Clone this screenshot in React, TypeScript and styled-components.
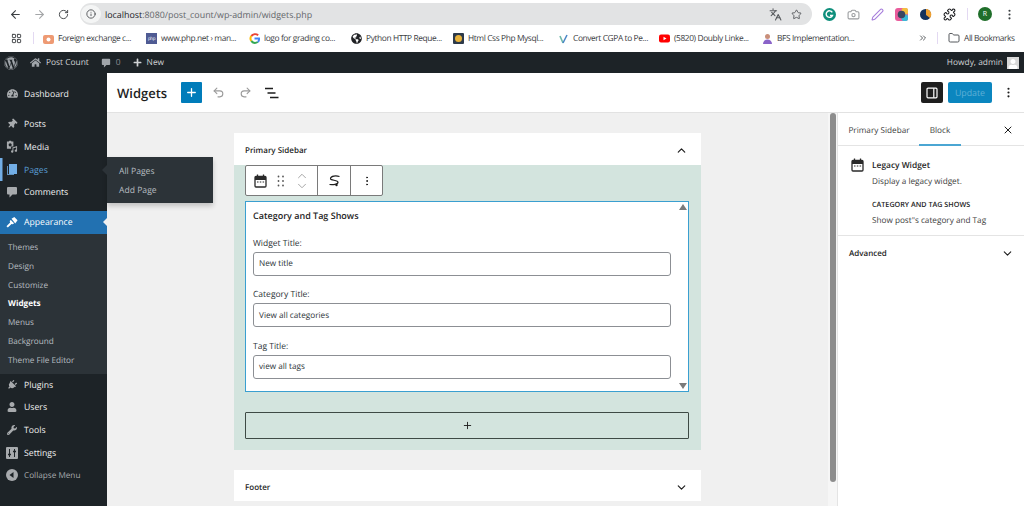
import styled, {createGlobalStyle} from 'styled-components';
import {
    ArrowLeft, ArrowRight, RotateCw, Info, Star, Languages, Camera, Puzzle, MoreVertical,
    Folder, ChevronsRight, Plus, Undo2, Redo2, X, ChevronUp, ChevronDown, Pen, LayoutGrid,
} from 'lucide-react';
import {
    FaWordpress, FaHome, FaPlus, FaThumbtack, FaUser, FaWrench, FaPlug,
    FaTachometerAlt, FaGlobeAmericas,
} from 'react-icons/fa';
import type {ReactNode} from 'react';

const GlobalStyle = createGlobalStyle`
    html, body {
        margin: 0;
        padding: 0;
        background: #fff;
        font-family: "Open Sans", "Noto Sans", sans-serif;
        text-rendering: geometricPrecision;
    }
    * {
        box-sizing: border-box;
    }
`;

const Page = styled.div`
    width: 1024px;
    height: 506px;
    overflow: hidden;
    display: flex;
    flex-direction: column;
`;

/* browser chrome */
const BrowserBar = styled.div`
    height: 26px;
    padding-top: 3px;
    display: flex;
    align-items: flex-start;
    color: #44474a;
`;

const NavButton = styled.div<{$w: number; $dim?: boolean}>`
    width: ${p => p.$w}px;
    height: 22px;
    display: flex;
    align-items: center;
    justify-content: center;
    color: ${p => (p.$dim ? '#a4a6a8' : '#3c4043')};
    flex: none;
`;

const AddressBar = styled.div`
    width: 732px;
    height: 22px;
    margin-left: 2px;
    border-radius: 11px;
    background: #e2e3e4;
    display: flex;
    align-items: center;
    flex: none;
`;

const InfoBubble = styled.div`
    width: 20px;
    height: 18px;
    margin-left: 1px;
    border-radius: 9px;
    background: #f4f5f5;
    display: flex;
    align-items: center;
    justify-content: center;
`;

const Url = styled.div`
    margin-left: 4px;
    font-size: 8.9px;
    color: #62666a;
    flex: 1;
    b {
        font-weight: 400;
        color: #202124;
    }
`;

const AddressIcons = styled.div`
    display: flex;
    align-items: center;
    gap: 9px;
    padding-right: 10px;
    color: #55585c;
`;

const Extensions = styled.div`
    display: flex;
    align-items: center;
    height: 22px;
    margin-left: 11px;
    gap: 11px;
`;

const ExtDivider = styled.div`
    width: 1px;
    height: 12px;
    background: #e3d9f2;
`;

const Avatar = styled.div`
    width: 14px;
    height: 14px;
    border-radius: 50%;
    background: #1f6e2a;
    color: #fff;
    font-size: 7px;
    display: flex;
    align-items: center;
    justify-content: center;
    margin-left: -1px;
`;

const BookmarksBar = styled.div`
    height: 26px;
    padding-bottom: 2px;
    display: flex;
    align-items: center;
    font-size: 8.4px;
    letter-spacing: -0.4px;
    color: #3c4043;
`;

const Bookmark = styled.div<{$w: number}>`
    width: ${p => p.$w}px;
    flex: none;
    display: flex;
    align-items: center;
    gap: 4px;
    white-space: nowrap;
`;

const Favicon = styled.span`
    width: 11px;
    height: 11px;
    display: inline-flex;
    align-items: center;
    justify-content: center;
    flex: none;
`;

const BarDivider = styled.div<{$m: string}>`
    width: 1px;
    height: 12px;
    background: #e3d9f2;
    margin: ${p => p.$m};
    flex: none;
`;

/* wp admin bar */
const AdminBar = styled.div`
    height: 21px;
    background: #1d2327;
    color: #d0d2d4;
    display: flex;
    align-items: center;
    font-size: 8.4px;
    padding-left: 4px;
    flex: none;
`;

const AdminItem = styled.div<{$ml: number; $dim?: boolean}>`
    display: flex;
    align-items: center;
    gap: 5px;
    margin-left: ${p => p.$ml}px;
    color: ${p => (p.$dim ? '#8c8f94' : '#d0d2d4')};
`;

const AdminIcon = styled.span`
    color: #a0a5aa;
    display: inline-flex;
`;

const Howdy = styled.div`
    margin-left: auto;
    padding-right: 5px;
    display: flex;
    align-items: center;
    gap: 4px;
`;

const AdminAvatar = styled.div`
    width: 12px;
    height: 12px;
    background: #d8d8d8;
    display: flex;
    align-items: flex-end;
    justify-content: center;
    overflow: hidden;
    color: #fff;
`;

const Body = styled.div`
    flex: 1;
    display: flex;
    min-height: 0;
`;

/* wp sidebar */
const Sidebar = styled.nav`
    width: 107px;
    flex: none;
    background: #1d2327;
    padding-top: 9.5px;
    position: relative;
    font-size: 8.7px;
`;

const MenuItem = styled.div<{$active?: boolean; $current?: boolean; $gap?: number; $dim?: boolean}>`
    height: 22.6px;
    margin-bottom: ${p => p.$gap ?? 0}px;
    display: flex;
    align-items: center;
    padding-left: 6px;
    gap: 6px;
    position: relative;
    font-size: ${p => (p.$dim ? '8.2px' : 'inherit')};
    background: ${p => (p.$active ? '#2271b1' : 'transparent')};
    color: ${p => (p.$active ? '#fff' : p.$current ? '#5a9fd6' : p.$dim ? '#a7aaad' : '#f0f0f1')};
    ${p => p.$current && 'box-shadow: inset 2.5px 0 0 #72aee6;'}
`;

const MenuIcon = styled.span<{$color?: string}>`
    width: 12px;
    height: 12px;
    display: inline-flex;
    align-items: center;
    justify-content: center;
    color: ${p => p.$color ?? '#a7aaad'};
    flex: none;
`;

const Tilted = styled.span`
    display: inline-flex;
    transform: rotate(45deg);
`;

const ActiveArrow = styled.span`
    position: absolute;
    right: 0;
    top: 7px;
    border: 4.5px solid transparent;
    border-right-color: #f0f0f1;
    border-left-width: 0;
`;

const SubMenu = styled.div`
    background: #2c3338;
    height: 140px;
    padding-top: 5px;
`;

const SubItem = styled.div<{$current?: boolean}>`
    height: 18.7px;
    display: flex;
    align-items: center;
    padding-left: 8px;
    font-size: 8.2px;
    color: ${p => (p.$current ? '#fff' : 'rgba(240, 246, 252, 0.7)')};
    font-weight: ${p => (p.$current ? 700 : 400)};
`;

const Flyout = styled.div`
    position: absolute;
    left: 107px;
    top: 84px;
    width: 106px;
    height: 46px;
    background: #2c3338;
    box-shadow: 0 3px 5px rgba(0, 0, 0, 0.2);
    padding: 5px 0 0 12px;
    font-size: 8.6px;
    color: rgba(240, 246, 252, 0.7);
    z-index: 2;
    &::before {
        content: '';
        position: absolute;
        left: -5px;
        top: 8px;
        border: 5px solid transparent;
        border-left-width: 0;
        border-right-color: #2c3338;
    }
`;

const FlyoutItem = styled.div`
    height: 18.7px;
    display: flex;
    align-items: center;
`;

/* editor */
const Editor = styled.main`
    flex: 1;
    display: flex;
    flex-direction: column;
    min-width: 0;
`;

const EditorHeader = styled.header`
    height: 40px;
    flex: none;
    background: #fff;
    border-bottom: 1px solid #e2e2e2;
    display: flex;
    align-items: center;
    padding-left: 10px;
    color: #1e1e1e;
`;

const Title = styled.h1`
    margin: 0 14px 0 0;
    font-size: 13px;
    font-weight: 600;
    width: 50px;
    white-space: nowrap;
`;

const InserterButton = styled.div`
    width: 21px;
    height: 21px;
    background: #007cba;
    border-radius: 1px;
    color: #fff;
    display: flex;
    align-items: center;
    justify-content: center;
`;

const HeaderTool = styled.div<{$dim?: boolean; $ml: number}>`
    margin-left: ${p => p.$ml}px;
    display: flex;
    color: ${p => (p.$dim ? '#9a9a9a' : '#1e1e1e')};
`;

const HeaderRight = styled.div`
    margin-left: auto;
    display: flex;
    align-items: center;
`;

const PanelToggle = styled.div`
    width: 22px;
    height: 21px;
    background: #1e1e1e;
    border-radius: 2px;
    display: flex;
    align-items: center;
    justify-content: center;
`;

const UpdateButton = styled.div`
    width: 44px;
    height: 21px;
    margin-left: 5px;
    background: #0b86bf;
    border-radius: 2px;
    color: #5fb0d6;
    font-size: 8.8px;
    display: flex;
    align-items: center;
    justify-content: center;
`;

const DotsSlot = styled.div`
    width: 32px;
    display: flex;
    justify-content: center;
    color: #1e1e1e;
`;

const EditorBody = styled.div`
    flex: 1;
    display: flex;
    min-height: 0;
`;

const Canvas = styled.div`
    width: 721px;
    flex: none;
    background: #f0f0f0;
    padding: 20px 0 0 127px;
`;

const Card = styled.section`
    width: 467px;
    background: #fff;
    color: #1e1e1e;
`;

const CardHeader = styled.div`
    height: 32px;
    padding: 2px 13px 0 11px;
    display: flex;
    align-items: center;
    justify-content: space-between;
    font-size: 8px;
    font-weight: 600;
`;

const CardBody = styled.div`
    background: #d3e4de;
    height: 285px;
    padding: 0 12px 0 11px;
`;

const BlockToolbar = styled.div`
    width: 138px;
    height: 31px;
    margin-bottom: 5px;
    background: #fff;
    border: 1px solid #7a7a7a;
    border-radius: 2px;
    display: flex;
    align-items: center;
`;

const ToolGroup = styled.div<{$w: number; $last?: boolean}>`
    width: ${p => p.$w}px;
    height: 100%;
    flex: none;
    display: flex;
    align-items: center;
    justify-content: center;
    gap: 10px;
    color: #1e1e1e;
    border-right: ${p => (p.$last ? 'none' : '1px solid #7a7a7a')};
`;

const Movers = styled.div`
    display: flex;
    flex-direction: column;
    color: #9a9a9a;
    gap: 0;
    margin: -4px 0;
    & > svg + svg {
        margin-top: -4px;
    }
`;

const WidgetBox = styled.div`
    width: 444px;
    height: 191px;
    background: #fff;
    border: 1.5px solid #3a9fd0;
    position: relative;
    padding: 7px 17px 0 7px;
    overflow: hidden;
    font-size: 8.5px;
`;

const WidgetTitle = styled.div`
    font-size: 9px;
    font-weight: 600;
    color: #1e1e1e;
    height: 14px;
    line-height: 14px;
    margin-bottom: 13.5px;
`;

const Field = styled.div`
    margin-bottom: 12.5px;
`;

const FieldLabel = styled.div`
    height: 13px;
    line-height: 13px;
    color: #2c3338;
    margin-bottom: 2px;
`;

const FieldInput = styled.div`
    height: 24px;
    background: #fff;
    border: 1px solid #8c8f94;
    border-radius: 3px;
    padding-left: 5px;
    font-size: 8.2px;
    display: flex;
    align-items: center;
    color: #2c3338;
`;

const ScrollArrow = styled.span<{$down?: boolean}>`
    position: absolute;
    right: 1px;
    ${p => (p.$down ? 'bottom: 2px;' : 'top: 2px;')}
    border-left: 4px solid transparent;
    border-right: 4px solid transparent;
    ${p => (p.$down ? 'border-top: 6px solid #7a7a7a;' : 'border-bottom: 6px solid #7a7a7a;')}
`;

const AddBlock = styled.div`
    width: 444px;
    height: 27px;
    margin-top: 20px;
    border: 1px solid #3e4a45;
    border-radius: 1px;
    display: flex;
    align-items: center;
    justify-content: center;
    color: #1e1e1e;
`;

const FooterCard = styled(Card)`
    margin-top: 20px;
    height: 31px;
`;

const Track = styled.div`
    width: 10px;
    flex: none;
    background: #f6f6f6;
    border-right: 1px solid #e4e4e4;
    padding-left: 2px;
`;

const Thumb = styled.div`
    width: 6px;
    height: 369px;
    border-radius: 3px;
    background: #8d8d8d;
`;

/* settings panel */
const Panel = styled.aside`
    flex: 1;
    background: #fff;
    color: #1e1e1e;
    font-size: 8.2px;
`;

const Tabs = styled.div`
    height: 33px;
    border-bottom: 1px solid #e4e4e4;
    display: flex;
    align-items: center;
    padding-left: 11px;
`;

const Tab = styled.div<{$active?: boolean; $w: number; $ml?: number}>`
    width: ${p => p.$w}px;
    height: 33px;
    margin-left: ${p => p.$ml ?? 0}px;
    padding-top: 3px;
    flex: none;
    display: flex;
    align-items: center;
    justify-content: center;
    color: #3d3d3d;
    position: relative;
    white-space: nowrap;
    &::after {
        content: '';
        display: ${p => (p.$active ? 'block' : 'none')};
        position: absolute;
        left: 0;
        right: 0;
        bottom: 0;
        height: 2px;
        background: #4ba6d3;
    }
`;

const TabClose = styled.div`
    margin-left: auto;
    margin-right: 10px;
    padding-top: 2px;
    display: flex;
`;

const BlockCard = styled.div`
    height: 90px;
    padding: 12px 0 0 13px;
    display: flex;
    gap: 8px;
    border-bottom: 1px solid #e4e4e4;
`;

const BlockInfo = styled.div`
    display: flex;
    flex-direction: column;
    padding-top: 1px;
`;

const BlockName = styled.div`
    font-weight: 600;
    font-size: 8.4px;
    height: 14px;
    line-height: 14px;
    margin-bottom: 2px;
`;

const BlockText = styled.div`
    height: 14px;
    line-height: 14px;
    color: #3d3d3d;
    white-space: nowrap;
`;

const BlockCaps = styled.div`
    font-size: 7.2px;
    font-weight: 600;
    height: 14px;
    line-height: 14px;
    margin: 9px 0 2px;
    white-space: nowrap;
`;

const Advanced = styled.div`
    height: 34px;
    display: flex;
    align-items: center;
    justify-content: space-between;
    padding: 0 10px 0 11px;
    font-weight: 600;
    font-size: 8px;
`;

const CalendarIcon = () => (
    <svg width="13" height="14" viewBox="0 0 13 14" fill="none" stroke="#2a2a2a" strokeWidth="1.3">
        <rect x="1" y="2.500" width="11" height="10.500" rx="1"/>
        <path d="M1 4.500h11" strokeWidth="3"/>
        <path d="M3.500 0.500v2M9.500 0.500v2"/>
        <path d="M3 8h1.500M5.800 8h1.500M8.600 8h1.500" strokeWidth="1.100"/>
    </svg>
);

const DragIcon = () => (
    <svg width="8" height="12" viewBox="0 0 8 12" fill="#555">
        {[1.500, 6, 10.500].map(y => [1.500, 6].map(x => <circle key={`${x}-${y}`} cx={x} cy={y} r="0.900"/>))}
    </svg>
);

const TransformIcon = () => (
    <svg width="13" height="13" viewBox="0 0 13 13" fill="none" stroke="#1e1e1e" strokeWidth="1.200">
        <path d="M11.500 2.500C8 1.500 3 1.800 2.500 4.300 2 7 10 5.500 10 8.300c0 2.200-5 2.500-8.500 2.200"/>
        <circle cx="8.500" cy="11" r="1.200" fill="#1e1e1e" stroke="none"/>
    </svg>
);

const ListViewIcon = () => (
    <svg width="14" height="12" viewBox="0 0 14 12" fill="none" stroke="#1e1e1e" strokeWidth="1.400">
        <path d="M0 1.500h8M2.500 6h8M5 10.500h8.500"/>
    </svg>
);

const PanelIcon = () => (
    <svg width="12" height="12" viewBox="0 0 12 12" fill="none" stroke="#fff" strokeWidth="1.200">
        <rect x="1" y="1.200" width="10" height="9.600" rx="1"/>
        <path d="M7.800 1.200v9.600"/>
    </svg>
);

const GrammarlyIcon = () => (
    <svg width="13" height="13" viewBox="0 0 13 13">
        <circle cx="6.500" cy="6.500" r="6.500" fill="#0f8f7c"/>
        <path d="M9.300 4.400a3.300 3.300 0 1 0 .2 3H7" fill="none" stroke="#fff" strokeWidth="1.400"/>
    </svg>
);

const RingIcon = () => (
    <svg width="13" height="13" viewBox="0 0 13 13">
        <rect width="13" height="13" rx="3" fill="#e95c9c"/>
        <rect x="6.500" width="6.500" height="6.500" rx="2" fill="#f3c03f"/>
        <rect x="6.500" y="6.500" width="6.500" height="6.500" rx="2" fill="#38b9d9"/>
        <circle cx="6.500" cy="6.500" r="3.800" fill="#3a4660"/>
    </svg>
);

const SwirlIcon = () => (
    <svg width="13" height="13" viewBox="0 0 13 13">
        <circle cx="6.500" cy="6.500" r="5.500" fill="#16325c"/>
        <path d="M7 1a5.500 5.500 0 0 1 4 9L7 7z" fill="#f0a030"/>
    </svg>
);

const CommentIcon = ({size = 12}: {size?: number}) => (
    <svg width={size} height={size} viewBox="0 0 12 12" fill="currentColor">
        <path d="M2 1h8a1 1 0 0 1 1 1v5.500a1 1 0 0 1-1 1H6.500L3.500 11.500V8.500H2a1 1 0 0 1-1-1V2a1 1 0 0 1 1-1z"/>
    </svg>
);

const MediaIcon = () => (
    <svg width="13" height="13" viewBox="0 0 13 13" fill="currentColor">
        <path d="M1 1h2l.6-.8h1.800L6 1h2v5.500H5.500V9H1zM4.500 3a1.700 1.700 0 1 0 0 3.400 1.700 1.700 0 0 0 0-3.400z"/>
        <path d="M7 7.500l5-1.500v5a1.300 1.300 0 1 1-1-1.300V7.500l-3 .9V12a1.300 1.300 0 1 1-1-1.300z"/>
    </svg>
);

const PagesIcon = () => (
    <svg width="12" height="13" viewBox="0 0 12 13" fill="currentColor">
        <path d="M1 3h1v8h6v1H1z" opacity="0.800"/>
        <path d="M3 1h8v10H3z"/>
    </svg>
);

const AppearanceIcon = () => (
    <svg width="13" height="13" viewBox="0 0 13 13" fill="currentColor">
        <path d="M6 2.500L9 0.500l3.500 3.500-2.500 3.500z"/>
        <path d="M5.200 3.800l3.500 3.500-1.200 1.200-1.500-.5-4 4-1.500-1.500 4-4-.5-1.500z"/>
    </svg>
);

const SettingsIcon = () => (
    <svg width="12" height="12" viewBox="0 0 12 12">
        <rect width="12" height="12" rx="1" fill="#a7aaad"/>
        <path d="M3.500 2v8M8.500 2v8" stroke="#1d2327" strokeWidth="1"/>
        <path d="M2 7.500h3M7 4.500h3" stroke="#1d2327" strokeWidth="1.400"/>
    </svg>
);

const CollapseIcon = () => (
    <svg width="12" height="12" viewBox="0 0 12 12">
        <circle cx="6" cy="6" r="6" fill="#a7aaad"/>
        <path d="M7.500 3v6L3.500 6z" fill="#1d2327"/>
    </svg>
);

const BOOKMARKS: {label: string; w: number; icon: ReactNode}[] = [
    {
        label: 'Foreign exchange c...', w: 103,
        icon: <svg width="11" height="11" viewBox="0 0 11 11"><rect y="2" width="11" height="9" rx="2" fill="#ee9a73"/><circle cx="5.500" cy="6.500" r="2" fill="#fff"/></svg>,
    },
    {
        label: 'www.php.net › man...', w: 103,
        icon: <svg width="11" height="11" viewBox="0 0 11 11"><rect width="11" height="11" fill="#4f5b93"/><text x="5.500" y="7" fontSize="4.500" fill="#fff" textAnchor="middle">php</text></svg>,
    },
    {
        label: 'logo for grading co...', w: 102,
        icon: <svg width="11" height="11" viewBox="0 0 11 11" fill="none" strokeWidth="2"><path d="M9.200 2.200A5 5 0 0 0 2.300 3" stroke="#ea4335"/><path d="M2.300 3a4.500 4.500 0 0 0 0 5" stroke="#fbbc05"/><path d="M2.300 8a5 5 0 0 0 6.500 1" stroke="#34a853"/><path d="M8.800 9A4 4 0 0 0 10 5.500H5.500" stroke="#4285f4"/></svg>,
    },
    {label: 'Python HTTP Reque...', w: 102, icon: <FaGlobeAmericas size={11} color="#202124"/>},
    {
        label: 'Html Css Php Mysql...', w: 105,
        icon: <svg width="11" height="11" viewBox="0 0 11 11"><rect width="11" height="11" rx="1" fill="#2d3a4a"/><circle cx="5.500" cy="5.500" r="3.500" fill="#e8b23a"/></svg>,
    },
    {
        label: 'Convert CGPA to Pe...', w: 101,
        icon: <svg width="11" height="11" viewBox="0 0 11 11" fill="none" strokeWidth="1.600"><path d="M2 3l3 7" stroke="#6fb7a8"/><path d="M5 10l4-8" stroke="#4a86c5"/></svg>,
    },
    {
        label: '(5820) Doubly Linke...', w: 103,
        icon: <svg width="11" height="11" viewBox="0 0 11 11"><rect y="1.500" width="11" height="8" rx="2" fill="#f00"/><path d="M4.500 3.700l3 1.800-3 1.800z" fill="#fff"/></svg>,
    },
];

const Menu = ({icon, label, ...rest}: {icon: ReactNode, label: string, $current?: boolean, $gap?: number, $dim?: boolean}) => (
    <MenuItem {...rest}>
        <MenuIcon $color={rest.$current ? '#72aee6' : undefined}>{icon}</MenuIcon>
        {label}
    </MenuItem>
);

const FormField = ({label, value}: {label: string, value: string}) => (
    <Field>
        <FieldLabel>{label}</FieldLabel>
        <FieldInput>{value}</FieldInput>
    </Field>
);

const App = () => (
    <Page>
        <GlobalStyle/>
        <BrowserBar>
            <NavButton $w={30}><ArrowLeft size={13}/></NavButton>
            <NavButton $w={18} $dim><ArrowRight size={13}/></NavButton>
            <NavButton $w={30}><RotateCw size={11}/></NavButton>
            <AddressBar>
                <InfoBubble><Info size={10}/></InfoBubble>
                <Url><b>localhost</b>:8080/post_count/wp-admin/widgets.php</Url>
                <AddressIcons>
                    <Languages size={13}/>
                    <Star size={11}/>
                </AddressIcons>
            </AddressBar>
            <Extensions>
                <GrammarlyIcon/>
                <Camera size={13} color="#9a9c9f"/>
                <Pen size={13} color="#a67ddb"/>
                <RingIcon/>
                <SwirlIcon/>
                <Puzzle size={13} color="#202124"/>
                <ExtDivider/>
                <Avatar>R</Avatar>
                <MoreVertical size={13} color="#3c4043"/>
            </Extensions>
        </BrowserBar>
        <BookmarksBar>
            <NavButton $w={32}><LayoutGrid size={11}/></NavButton>
            <BarDivider $m="0 9px 0 1px"/>
            {BOOKMARKS.map(b => (
                <Bookmark key={b.label} $w={b.w}>
                    <Favicon>{b.icon}</Favicon>
                    {b.label}
                </Bookmark>
            ))}
            <Bookmark $w={156}>
                <Favicon>
                    <svg width="11" height="11" viewBox="0 0 11 11"><circle cx="5.500" cy="3.500" r="2.500" fill="#c98f7a"/><path d="M1 11a4.500 4.500 0 0 1 9 0z" fill="#8a63c9"/></svg>
                </Favicon>
                BFS Implementation...
            </Bookmark>
            <ChevronsRight size={10} color="#3c4043"/>
            <BarDivider $m="0 10px 0 9px"/>
            <Bookmark $w={70}>
                <Folder size={12} color="#55585c"/>
                All Bookmarks
            </Bookmark>
        </BookmarksBar>
        <AdminBar>
            <AdminIcon><FaWordpress size={14}/></AdminIcon>
            <AdminItem $ml={12}><AdminIcon><FaHome size={11}/></AdminIcon>Post Count</AdminItem>
            <AdminItem $ml={12} $dim><AdminIcon><CommentIcon size={10}/></AdminIcon>0</AdminItem>
            <AdminItem $ml={12}><FaPlus size={9}/>New</AdminItem>
            <Howdy>
                Howdy, admin
                <AdminAvatar><FaUser size={10}/></AdminAvatar>
            </Howdy>
        </AdminBar>
        <Body>
            <Sidebar>
                <Menu icon={<FaTachometerAlt size={11}/>} label="Dashboard" $gap={8}/>
                <Menu icon={<Tilted><FaThumbtack size={10}/></Tilted>} label="Posts"/>
                <Menu icon={<MediaIcon/>} label="Media"/>
                <Menu icon={<PagesIcon/>} label="Pages" $current/>
                <Menu icon={<CommentIcon/>} label="Comments" $gap={7.500}/>
                <MenuItem $active>
                    <MenuIcon $color="#fff"><AppearanceIcon/></MenuIcon>
                    Appearance
                    <ActiveArrow/>
                </MenuItem>
                <SubMenu>
                    <SubItem>Themes</SubItem>
                    <SubItem>Design</SubItem>
                    <SubItem>Customize</SubItem>
                    <SubItem $current>Widgets</SubItem>
                    <SubItem>Menus</SubItem>
                    <SubItem>Background</SubItem>
                    <SubItem>Theme File Editor</SubItem>
                </SubMenu>
                <Menu icon={<Tilted><FaPlug size={10}/></Tilted>} label="Plugins"/>
                <Menu icon={<FaUser size={10}/>} label="Users"/>
                <Menu icon={<FaWrench size={10}/>} label="Tools"/>
                <Menu icon={<SettingsIcon/>} label="Settings"/>
                <Menu icon={<CollapseIcon/>} label="Collapse Menu" $dim/>
                <Flyout>
                    <FlyoutItem>All Pages</FlyoutItem>
                    <FlyoutItem>Add Page</FlyoutItem>
                </Flyout>
            </Sidebar>
            <Editor>
                <EditorHeader>
                    <Title>Widgets</Title>
                    <InserterButton><Plus size={13} strokeWidth={2.4}/></InserterButton>
                    <HeaderTool $ml={10} $dim><Undo2 size={13}/></HeaderTool>
                    <HeaderTool $ml={14} $dim><Redo2 size={13}/></HeaderTool>
                    <HeaderTool $ml={13}><ListViewIcon/></HeaderTool>
                    <HeaderRight>
                        <PanelToggle><PanelIcon/></PanelToggle>
                        <UpdateButton>Update</UpdateButton>
                        <DotsSlot><MoreVertical size={13}/></DotsSlot>
                    </HeaderRight>
                </EditorHeader>
                <EditorBody>
                    <Canvas>
                        <Card>
                            <CardHeader>Primary Sidebar<ChevronUp size={13} strokeWidth={2.2}/></CardHeader>
                            <CardBody>
                                <BlockToolbar>
                                    <ToolGroup $w={72}>
                                        <CalendarIcon/>
                                        <DragIcon/>
                                        <Movers>
                                            <ChevronUp size={14} strokeWidth={1.5}/>
                                            <ChevronDown size={14} strokeWidth={1.5}/>
                                        </Movers>
                                    </ToolGroup>
                                    <ToolGroup $w={33}><TransformIcon/></ToolGroup>
                                    <ToolGroup $w={31} $last><MoreVertical size={12}/></ToolGroup>
                                </BlockToolbar>
                                <WidgetBox>
                                    <WidgetTitle>Category and Tag Shows</WidgetTitle>
                                    <FormField label="Widget Title:" value="New title"/>
                                    <FormField label="Category Title:" value="View all categories"/>
                                    <FormField label="Tag Title:" value="view all tags"/>
                                    <ScrollArrow/>
                                    <ScrollArrow $down/>
                                </WidgetBox>
                                <AddBlock><Plus size={11}/></AddBlock>
                            </CardBody>
                        </Card>
                        <FooterCard>
                            <CardHeader>Footer<ChevronDown size={13} strokeWidth={2.2}/></CardHeader>
                        </FooterCard>
                    </Canvas>
                    <Track><Thumb/></Track>
                    <Panel>
                        <Tabs>
                            <Tab $w={60}>Primary Sidebar</Tab>
                            <Tab $w={42} $ml={10} $active>Block</Tab>
                            <TabClose><X size={12}/></TabClose>
                        </Tabs>
                        <BlockCard>
                            <CalendarIcon/>
                            <BlockInfo>
                                <BlockName>Legacy Widget</BlockName>
                                <BlockText>Display a legacy widget.</BlockText>
                                <BlockCaps>CATEGORY AND TAG SHOWS</BlockCaps>
                                <BlockText>Show post"s category and Tag</BlockText>
                            </BlockInfo>
                        </BlockCard>
                        <Advanced>Advanced<ChevronDown size={13}/></Advanced>
                    </Panel>
                </EditorBody>
            </Editor>
        </Body>
    </Page>
);

export default App;
